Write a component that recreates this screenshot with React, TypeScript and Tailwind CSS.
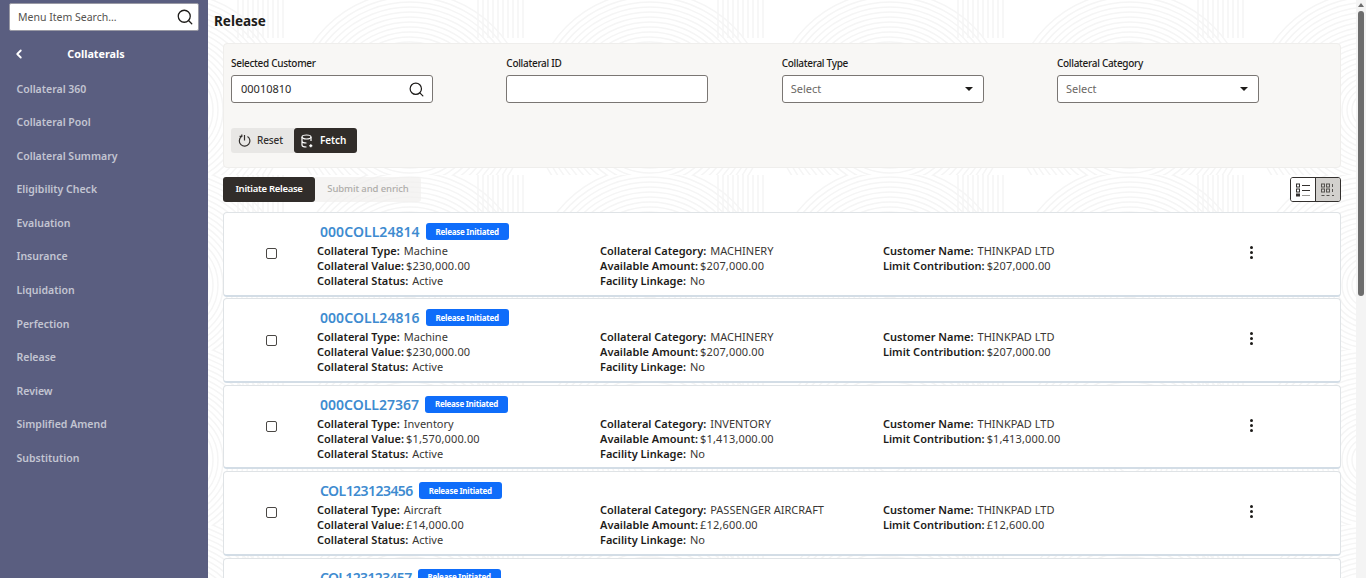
import { ChevronLeft, Search } from "lucide-react";

const menuItems = [
  "Collateral 360",
  "Collateral Pool",
  "Collateral Summary",
  "Eligibility Check",
  "Evaluation",
  "Insurance",
  "Liquidation",
  "Perfection",
  "Release",
  "Review",
  "Simplified Amend",
  "Substitution",
];

const cards = [
  { id: "000COLL24814", titleClass: "tracking-[0.05px]", type: "Machine", value: "$230,000.00", category: "MACHINERY", amount: "$207,000.00", limit: "$207,000.00" },
  { id: "000COLL24816", titleClass: "tracking-[0.05px]", type: "Machine", value: "$230,000.00", category: "MACHINERY", amount: "$207,000.00", limit: "$207,000.00" },
  { id: "000COLL27367", titleClass: "", type: "Inventory", value: "$1,570,000.00", category: "INVENTORY", amount: "$1,413,000.00", limit: "$1,413,000.00" },
  { id: "COL123123456", titleClass: "tracking-[-0.55px]", type: "Aircraft", value: "£14,000.00", category: "PASSENGER AIRCRAFT", amount: "£12,600.00", limit: "£12,600.00" },
  { id: "COL123123457", titleClass: "tracking-[-0.65px]", type: "Aircraft", value: "£14,000.00", category: "PASSENGER AIRCRAFT", amount: "£12,600.00", limit: "£12,600.00" },
];

const Field = ({ label, value }: { label: string; value: string }) => (
  <div className="h-[15px] leading-[15px] whitespace-nowrap">
    <span className="font-semibold text-[#1d1b19]">{label}</span>
    <span className="ml-1 text-[#3a3734]">{value}</span>
  </div>
);

const AmountField = ({ label, value }: { label: string; value: string }) => (
  <div className="h-[15px] leading-[15px] whitespace-nowrap">
    <span className="font-semibold text-[#1d1b19]">{label}</span>
    <span className="ml-[2px] tracking-[0.15px] text-[#3a3734]">{value}</span>
  </div>
);

const radii = [8, 13, 18, 23, 28, 33, 38, 43, 48, 53, 58, 63, 68, 73, 78, 83, 88, 93, 98, 103, 108, 113, 118];
const hatches = [30, 35, 40, 45, 50, 55, 60, 65, 70, 75];

const Pattern = () => (
  <svg className="absolute inset-0 w-full h-full" fill="none">
    <defs>
      <pattern id="arcs" width="240" height="175" patternUnits="userSpaceOnUse">
        <g stroke="#f5f5f5" strokeWidth="1.5">
          {radii.map((r) => (
            <circle key={`a${r}`} cx="202" cy="110" r={r} />
          ))}
          {radii.map((r) => (
            <circle key={`b${r}`} cx="-38" cy="110" r={r} />
          ))}
          {hatches.map((x) => (
            <path key={x} d={`M${x} 0v38`} />
          ))}
        </g>
      </pattern>
    </defs>
    <rect width="100%" height="100%" fill="url(#arcs)" />
  </svg>
);

const Label = ({ text }: { text: string }) => (
  <div className="text-[10px] leading-[15px] tracking-[-0.3px] font-medium text-[#1d1b19] mb-[4px]">{text}</div>
);

const SelectBox = ({ label }: { label: string }) => (
  <div>
    <Label text={label} />
    <div className="w-[202px] h-[28px] bg-white border border-[#7a7673] rounded-[3px] flex items-center justify-between pl-[8px] pr-[10px] text-[11px] text-[#6b6865]">
      <span>Select</span>
      <span className="w-0 h-0 border-x-[4.5px] border-x-transparent border-t-[4.5px] border-t-[#1d1b19]" />
    </div>
  </div>
);

const ListIcon = () => (
  <svg width="14" height="14" viewBox="0 0 14 14" fill="none" stroke="#33302e">
    <rect x="0.5" y="1" width="3" height="3" />
    <rect x="0.5" y="6" width="3" height="3" />
    <rect x="0.5" y="11" width="3" height="2" fill="#33302e" />
    <path d="M6 2.5h8M6 7.5h8" />
    <path d="M6 12.5h8" stroke="#9a9895" />
  </svg>
);

const GridIcon = () => (
  <svg width="14" height="14" viewBox="0 0 14 14" fill="none" stroke="#55524f">
    <rect x="0.5" y="1" width="3" height="3" />
    <rect x="5.5" y="1" width="3" height="3" />
    <path d="M11.5 1v3" />
    <rect x="0.5" y="6" width="3" height="3" />
    <rect x="5.5" y="6" width="3" height="3" />
    <path d="M11.5 6v3" />
    <path d="M0.5 12.5h3M5.5 12.5h3M11 12.5h2" />
  </svg>
);

const App = () => {
  return (
    <div className="h-[582px] w-[1366px] bg-white overflow-hidden font-['Noto_Sans',sans-serif]">
      <div className="h-[578px] flex">
        {/* sidebar */}
        <div className="w-[208px] shrink-0 bg-[#5a5e80] pt-[3px]">
          <div className="mx-[9px] h-[28px] bg-white border border-[#9a9aa5] rounded-[2px] flex items-center justify-between pl-[8px] pr-[4px]">
            <span className="pt-[1px] text-[10.5px] text-[#55524f]">Menu Item Search...</span>
            <Search size={18} strokeWidth={1.7} className="text-[#1d1b19]" />
          </div>
          <div className="relative h-[20px] mt-[13px] flex items-center justify-center text-[10.8px] font-bold text-white">
            <ChevronLeft size={14} strokeWidth={3.2} className="absolute left-[12px] top-[3px]" />
            <span className="-ml-[16px]">Collaterals</span>
          </div>
          <div className="mt-[8.5px] pl-[16.5px]">
            {menuItems.map((item) => (
              <div key={item} className="h-[33.6px] leading-[33.6px] text-[10.5px] font-semibold text-[#c3c5d2]">
                {item}
              </div>
            ))}
          </div>
        </div>

        {/* main */}
        <div className="relative flex-1 min-w-0 bg-white overflow-hidden">
          <Pattern />
          <div className="relative pl-[6px] pt-[13px]">
            <h1 className="text-[13.5px] leading-[17px] font-bold text-[#1d1b19]">Release</h1>

            <div className="ml-[9px] mt-[13px] w-[1118px] h-[125px] bg-[#f8f7f5] border border-[#efeeec] rounded-[4px] pl-[7px] pt-[12px]">
              <div className="flex gap-[73.33px]">
                <div>
                  <Label text="Selected Customer" />
                  <div className="w-[202px] h-[28px] bg-white border border-[#7a7673] rounded-[3px] flex items-center justify-between pl-[9px] pr-[7px] text-[11px] text-[#2b2926]">
                    <span>00010810</span>
                    <Search size={17} strokeWidth={1.7} className="text-[#1d1b19]" />
                  </div>
                </div>
                <div>
                  <Label text="Collateral ID" />
                  <div className="w-[202px] h-[28px] bg-white border border-[#7a7673] rounded-[3px]" />
                </div>
                <SelectBox label="Collateral Type" />
                <SelectBox label="Collateral Category" />
              </div>
              <div className="flex mt-[25px]">
                <div className="w-[63px] h-[25px] bg-[#e8e7e5] rounded-l-[3px] flex items-center pl-[7px] gap-[6px] text-[10px] tracking-[-0.1px] font-medium text-[#33302e]">
                  <svg width="13" height="14" viewBox="0 0 13 14" fill="none" stroke="#33302e" strokeWidth="1.2">
                    <path d="M3.2 2.8A5.3 5.3 0 1 0 9.5 2.4" />
                    <path d="M6.5 1v5.5" />
                    <path d="M1.6 2.4h2.2V.6" />
                  </svg>
                  <span>Reset</span>
                </div>
                <div className="w-[63px] h-[25px] bg-[#312d2a] rounded-[3px] flex items-center pl-[7px] gap-[6px] text-[10px] tracking-[-0.1px] font-semibold text-white">
                  <svg width="13" height="14" viewBox="0 0 13 14" fill="none" stroke="#fff" strokeWidth="1.2">
                    <ellipse cx="5.5" cy="3" rx="4.5" ry="2" />
                    <path d="M1 3v8c0 1.2 2 2 4.5 2M10 3v4M1 7c0 1.2 2 2 4.5 2" />
                    <path d="M9.8 10.2v3M8.3 11.7h3" strokeWidth="1.4" />
                  </svg>
                  <span>Fetch</span>
                </div>
              </div>
            </div>

            <div className="ml-[9px] mt-[9px] w-[1118px] flex items-center justify-between">
              <div className="flex">
                <div className="w-[92px] h-[25px] bg-[#312d2a] rounded-[3px] flex items-center justify-center text-[9.5px] tracking-[-0.3px] font-semibold text-white">
                  Initiate Release
                </div>
                <div className="w-[106px] h-[25px] bg-[#f1f0ee]/70 rounded-r-[3px] flex items-center justify-center text-[9.5px] tracking-[-0.1px] font-medium text-[#aeaca9]">
                  Submit and enrich
                </div>
              </div>
              <div className="w-[51px] h-[25px] flex border border-[#33302e] rounded-[3px] overflow-hidden">
                <div className="w-[25px] bg-white flex items-center justify-center border-r border-[#33302e]">
                  <ListIcon />
                </div>
                <div className="flex-1 bg-[#d2d0cd] flex items-center justify-center">
                  <GridIcon />
                </div>
              </div>
            </div>

            <div className="ml-[9px] mt-[10px] w-[1118px] flex flex-col gap-[1.9px]">
              {cards.map((card) => (
                <div key={card.id} className="h-[84.5px] shrink-0 bg-white border border-[#dfe3e6] border-b-2 border-b-[#d3dde6] rounded-[4px] flex">
                  <div className="w-[93px] shrink-0 flex items-center justify-center pl-[2px]">
                    <span className="w-[11px] h-[11px] border border-[#4a4744] rounded-[2px]" />
                  </div>
                  <div className="flex-1 pt-[9px] text-[11px]">
                    <div className="h-[19px] flex items-center pl-[3px] gap-[6px]">
                      <span className={`text-[14px] font-semibold text-[#3e8bd0] ${card.titleClass}`}>{card.id}</span>
                      <span className="w-[83px] h-[17px] bg-[#0f6dfa] rounded-[3px] flex items-center justify-center text-[8px] tracking-[-0.25px] font-bold text-white">
                        Release Initiated
                      </span>
                    </div>
                    <div className="flex mt-[2px]">
                      <div className="w-[283px]">
                        <Field label="Collateral Type:" value={card.type} />
                        <AmountField label="Collateral Value:" value={card.value} />
                        <Field label="Collateral Status:" value="Active" />
                      </div>
                      <div className="w-[283px]">
                        <Field label="Collateral Category:" value={card.category} />
                        <AmountField label="Available Amount:" value={card.amount} />
                        <Field label="Facility Linkage:" value="No" />
                      </div>
                      <div className="w-[368px] relative">
                        <Field label="Customer Name:" value="THINKPAD LTD" />
                        <AmountField label="Limit Contribution:" value={card.limit} />
                        <div className="absolute left-[367px] top-[3px] flex flex-col gap-[2px]">
                          <span className="w-[3px] h-[3px] rounded-full bg-[#1d1b19]" />
                          <span className="w-[3px] h-[3px] rounded-full bg-[#1d1b19]" />
                          <span className="w-[3px] h-[3px] rounded-full bg-[#1d1b19]" />
                        </div>
                      </div>
                    </div>
                  </div>
                </div>
              ))}
            </div>
          </div>
          {/* scrollbar */}
          <div className="absolute right-0 top-0 bottom-0 w-[10px] bg-[#f4f4f4] flex flex-col items-center pt-[3px]">
            <span className="w-0 h-0 border-x-[3px] border-x-transparent border-b-[4px] border-b-[#6d6d6d]" />
            <span className="w-[6px] h-[285px] mt-[4px] rounded-full bg-[#6d6d6d]" />
          </div>
        </div>
      </div>
    </div>
  );
};

export default App;
